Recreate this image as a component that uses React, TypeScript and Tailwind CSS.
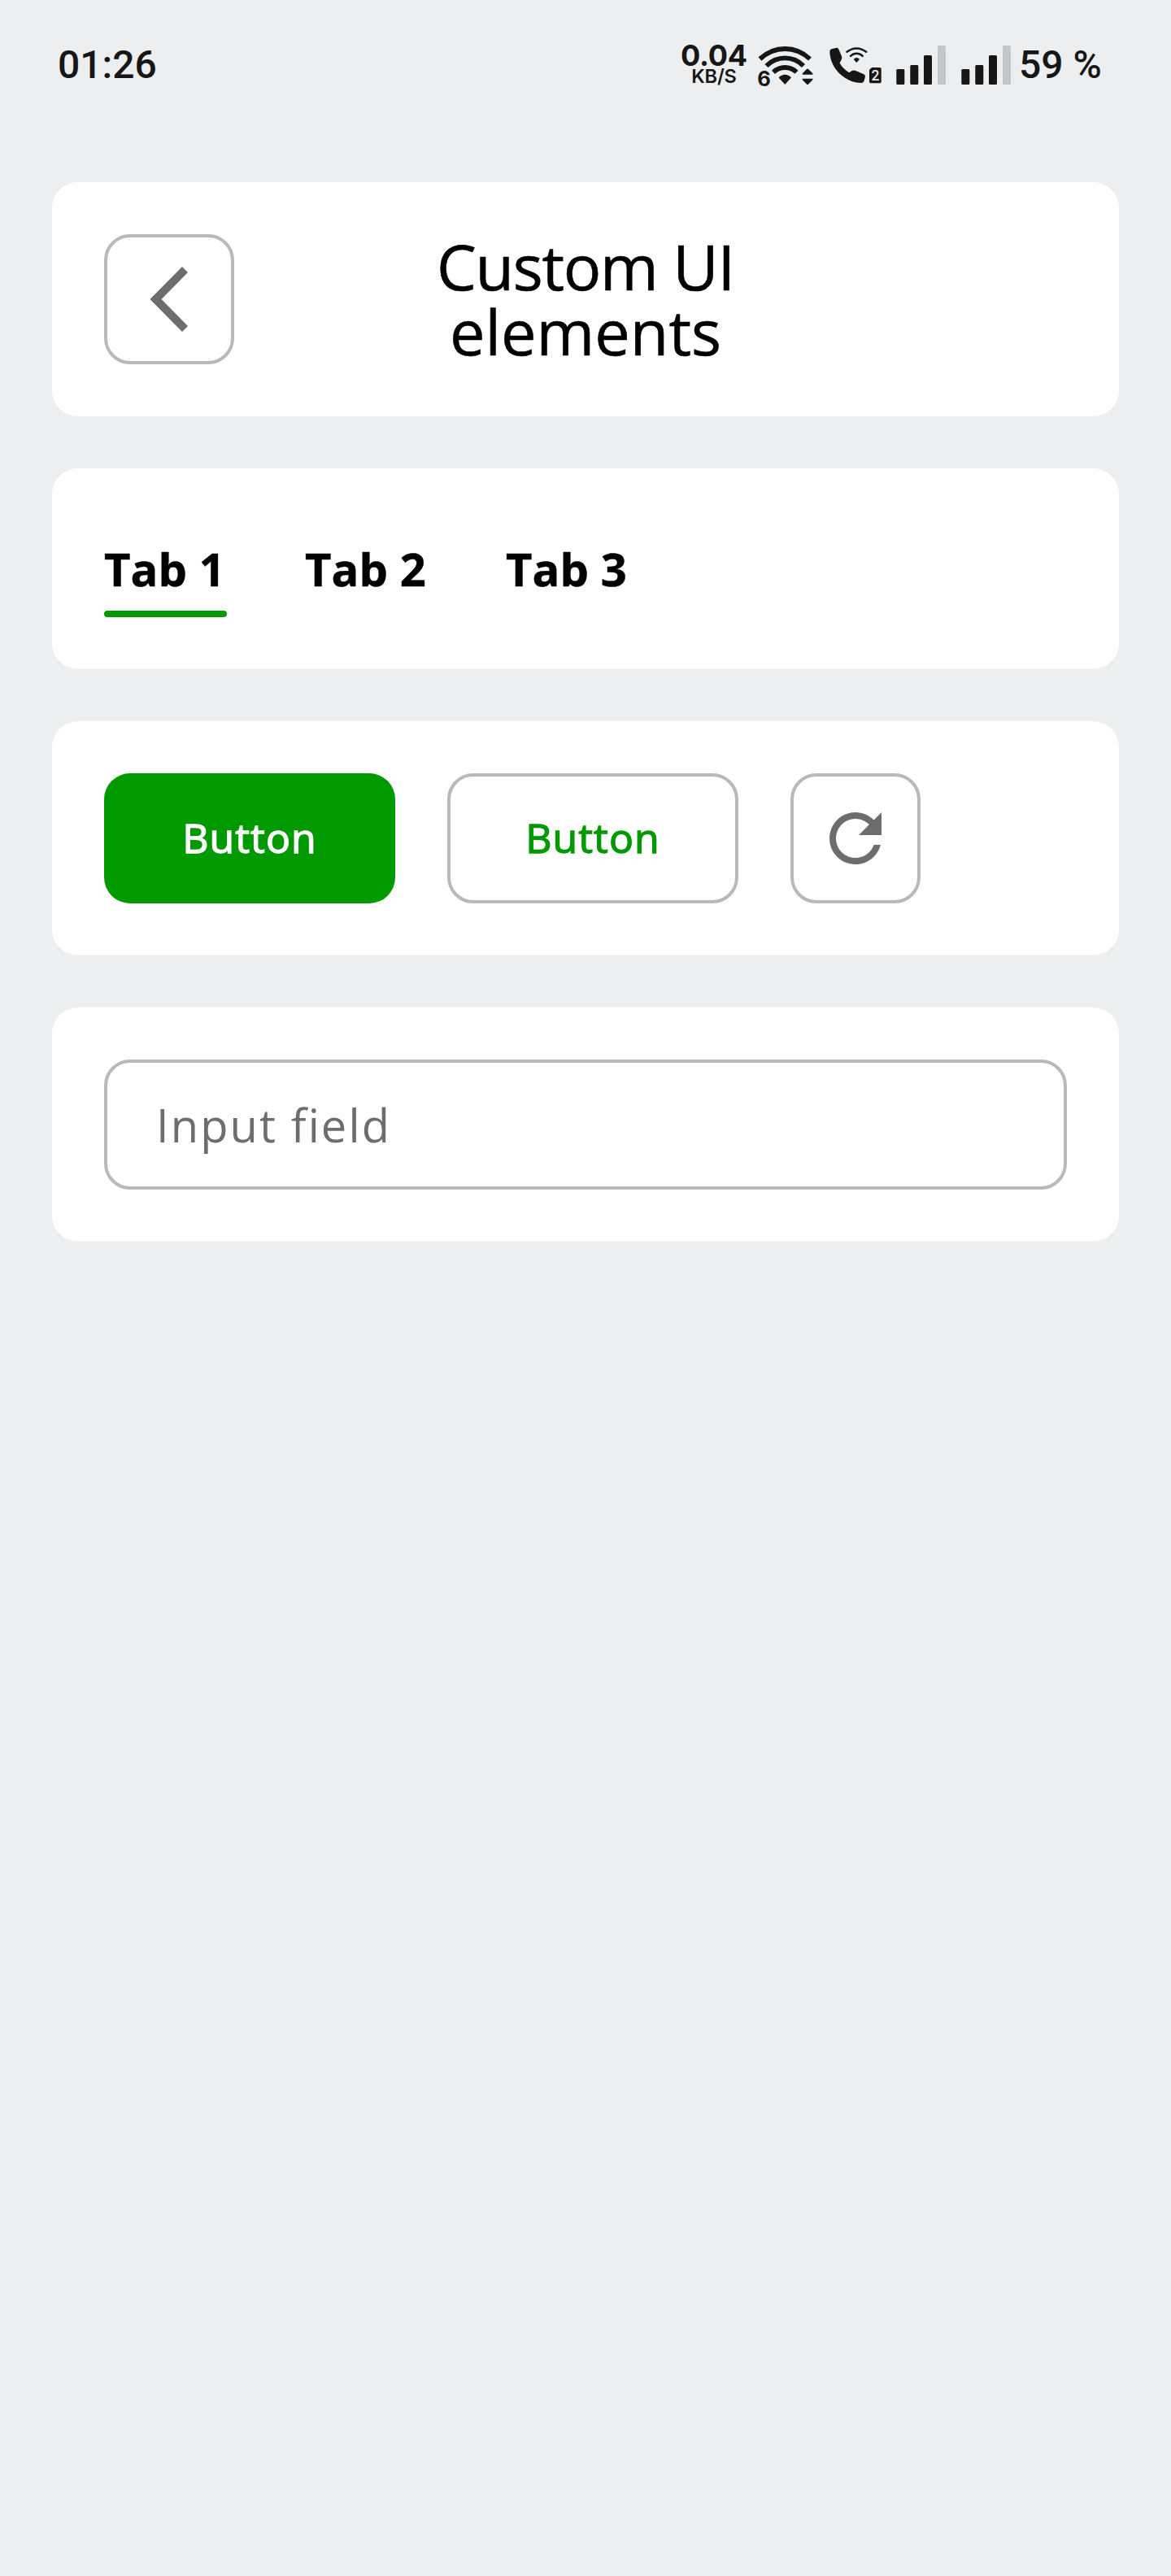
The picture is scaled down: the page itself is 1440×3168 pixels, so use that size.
import type { ReactNode } from "react";

function Card({ children, className = "" }: { children: ReactNode; className?: string }) {
  return <section className={`rounded-[32px] bg-white px-16 ${className}`}>{children}</section>;
}

function Signal() {
  return (
    <svg className="shrink-0" width="62" height="50" viewBox="1101 55 62 50" fill="#161616">
      <rect x="1101.3" y="85" width="10" height="19" rx="1.5" />
      <rect x="1118.3" y="80" width="10" height="24" rx="1.5" />
      <rect x="1135" y="68" width="10" height="36" rx="1.5" />
      <rect x="1152" y="56" width="10" height="48" rx="1.5" fill="#c4c5c6" />
    </svg>
  );
}

function Wifi() {
  return (
    <svg className="shrink-0" width="70" height="60" viewBox="930 50 70 60" fill="#161616">
      <g fill="none" stroke="#161616" strokeWidth="5.8">
        <path d="M933.5 72.5Q947 60 964.3 60T995 72.5" />
        <path d="M941.5 81Q951 71.4 964.3 71.4T987 81" />
        <path d="M950 88.8Q956 83 964.3 83T978.5 88.8" />
      </g>
      <path d="M956.6 95.5Q960 91.8 964.3 91.8T972 95.5L964.9 103.3Q964.3 104 963.7 103.3Z" />
      <text x="930.3" y="105.5" fontSize="25.5" fontFamily="Inter, sans-serif" fontWeight="650">6</text>
      <path d="M985.8 91.8V90.3L991 85Q992 84 993 85L998.4 90.3V91.8ZM985.8 96.8V98.3L991 103.5Q992 104.5 993 103.5L998.4 98.3V96.8Z" />
    </svg>
  );
}

function WifiCall() {
  return (
    <svg className="shrink-0" width="66" height="50" viewBox="1018 55 66 50" fill="#161616">
      <path d="M1019.3 63.5Q1019.3 61.3 1021.5 60.3L1027 58.9Q1029.3 58.3 1030.2 60.3L1034 69.3Q1034.7 71.3 1033.8 73.3L1031.5 77.4Q1035.5 84.5 1043.3 89.2L1046.6 87Q1048.8 85.9 1051.3 87L1061.2 91.2Q1063.4 92.2 1062.9 94.5L1061.6 99.5Q1060.8 101.8 1058.5 102C1040 102 1020 86 1019.3 63.5Z" />
      <g fill="none" stroke="#161616" strokeWidth="2.5" strokeLinecap="round">
        <path d="M1040.5 63.8Q1046 59.4 1052.3 59.4T1064.2 63.8" />
        <path d="M1045 68.8Q1048.2 65.8 1052.3 65.8T1059.7 68.8" />
      </g>
      <path d="M1048.7 73Q1050.2 71 1052.3 71T1056 73L1052.3 76.9Z" />
      <path d="M1071 83H1081Q1082.7 83 1082.7 84.7V100.6Q1082.7 102.3 1081 102.3H1069.7Q1068 102.3 1068 100.6V86Z" />
      <text x="1075.4" y="99" textAnchor="middle" fontSize="17.5" fontFamily="Roboto, sans-serif" fontWeight="500" fill="#edeef0">2</text>
    </svg>
  );
}

function StatusBar() {
  return (
    <header className="flex h-40 items-center pl-[71px] font-['Roboto',sans-serif] text-[48px] font-medium text-[#161616]">
      <span className="leading-[160px]">01:26</span>
      <div className="ml-auto flex items-center pr-[86px]">
        <div className="flex w-[82px] flex-col items-center pb-[2px] font-['Inter',sans-serif]">
          <span className="text-[36px] font-bold leading-[27px] tracking-[-0.2px]">0.04</span>
          <span className="mt-[2px] text-[23.5px] font-semibold leading-[20px] tracking-[-0.2px]">KB/S</span>
        </div>
        <div className="ml-[12px]"><Wifi /></div>
        <div className="ml-[18px]"><WifiCall /></div>
        <div className="ml-[17px]"><Signal /></div>
        <div className="ml-[18px]"><Signal /></div>
        <span className="ml-[9px] w-[101px] whitespace-nowrap leading-[160px]">59 %</span>
      </div>
    </header>
  );
}

const outline = "rounded-[32px] border-4 border-[#b9b9b9]";
const tabs = ["Tab 1", "Tab 2", "Tab 3"];

export default function App() {
  return (
    <main className="h-[3168px] w-[1440px] bg-[#edeef0] font-['Open_Sans',sans-serif] text-black">
      <StatusBar />
      <div className="flex flex-col gap-16 px-16 pt-16">
        <Card className="flex h-72 items-center justify-between">
          <button className={`flex size-40 items-center justify-center ${outline}`}>
            <svg width="48" height="80" viewBox="0 0 48 80" className="shrink-0" fill="#6d6d6d">
              <path d="M40 0L0.4 40L40 80L47 73L14.5 40L47 7Z" />
            </svg>
          </button>
          <h1 className="flex flex-col items-center pb-[2px] text-[77.5px] leading-[80px] [-webkit-text-stroke:0.6px_currentColor]">
            <span className="tracking-[-1.3px]">Custom UI</span>
            <span>elements</span>
          </h1>
          <div className="w-40" />
        </Card>

        <Card className="flex h-[247px] items-start gap-24 pt-[85px] text-[56px] font-bold leading-[76px] tracking-[0.1px]">
          {tabs.map((tab, i) => (
            <div key={tab} className="flex w-[151px] flex-col whitespace-nowrap [-webkit-text-stroke:0.5px_currentColor]">
              <span>{tab}</span>
              {i === 0 && <span className="mt-[14px] h-2 rounded-full bg-[#009900]" />}
            </div>
          ))}
        </Card>

        <Card className="flex h-72 items-center gap-16 text-[50px] tracking-[1px] [-webkit-text-stroke:1.3px_currentColor]">
          <button className="h-40 w-[358px] rounded-[32px] bg-[#009900] pb-[2px] text-white">Button</button>
          <button className={`h-40 w-[358px] pb-[2px] text-[#009900] ${outline}`}>Button</button>
          <button className={`flex size-40 items-center justify-center ${outline}`}>
            <svg width="96" height="96" viewBox="0 0 24 24" className="shrink-0" fill="#6d6d6d">
              <path d="M17.65 6.35C16.2 4.9 14.21 4 12 4c-4.42 0-7.99 3.58-7.99 8s3.57 8 7.99 8c3.73 0 6.84-2.55 7.73-6h-2.08c-.82 2.33-3.04 4-5.65 4-3.31 0-6-2.69-6-6s2.69-6 6-6c1.66 0 3.14.69 4.22 1.78L13 11h7V4l-2.35 2.35z" />
            </svg>
          </button>
        </Card>

        <Card className="flex h-72 items-center">
          <input
            aria-label="Input field"
            placeholder="Input field"
            className={`h-40 w-full bg-transparent px-[60px] text-[56px] tracking-[2.1px] outline-none placeholder:text-[#6d6d6d] placeholder:opacity-100 ${outline}`}
          />
        </Card>
      </div>
    </main>
  );
}
